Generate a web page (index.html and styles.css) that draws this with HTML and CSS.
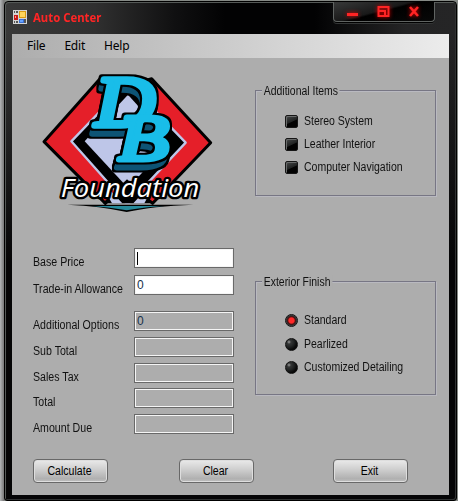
FILE: index.html
```html
<!DOCTYPE html>
<html lang="en">
<head>
<meta charset="utf-8">
<title>Auto Center</title>
<link rel="stylesheet" href="styles.css">
</head>
<body>
<div class="window">
  <header class="titlebar">
    <svg class="app-icon" width="14" height="14" viewBox="0 0 14 14">
      <rect width="14" height="14" fill="#d4d4d4"/>
      <path d="M1 1h1v2H1zM3 1h2v2H3zM1 11h1v2H1zM3 11h2v2H3zM11 9h2v4h-2z" fill="#555"/>
      <rect x="1" y="5" width="4" height="5" fill="#c81818"/><rect x="2" y="6" width="1" height="2" fill="#ff9a8a"/>
      <rect x="6" y="1" width="7" height="7" fill="#d99a10"/><rect x="7" y="2" width="5" height="5" fill="#ffd55a"/>
      <rect x="6" y="9" width="5" height="4" fill="#3970d8"/><rect x="7" y="10" width="3" height="2" fill="#68a4ff"/>
    </svg>
    <h1 class="title">Auto Center</h1>
    <div class="controls">
      <svg width="102" height="20" viewBox="0 0 102 20">
        <g fill="none" stroke="#ff2424" stroke-width="2">
          <path d="M14 12.500h11" stroke-width="3"/>
          <path d="M45.500 5h10v9h-10zM45 9h7v5"/>
          <path d="M77 5l8 9M85 5l-8 9" stroke-width="2.600"/>
        </g>
      </svg>
    </div>
  </header>
  <div class="client">
    <nav class="menu"><span>File</span><span>Edit</span><span>Help</span></nav>
    <main class="content">
      <section class="left">
        <svg class="logo" width="180" height="150" viewBox="0 0 540 450">
          <defs>
            <filter id="extrude" filterUnits="userSpaceOnUse" x="0" y="0" width="540" height="450" color-interpolation-filters="sRGB">
              <feOffset in="SourceAlpha" dx="-7" dy="24" result="low"/>
              <feOffset in="SourceAlpha" dx="-4" dy="13" result="mid"/>
              <feMerge result="depth"><feMergeNode in="low"/><feMergeNode in="mid"/></feMerge>
              <feMorphology in="depth" operator="dilate" radius="7" result="depthEdge"/>
              <feFlood flood-color="#0d5475"/><feComposite in2="depth" operator="in" result="side"/>
              <feMorphology in="SourceAlpha" operator="dilate" radius="7" result="faceEdge"/>
              <feFlood flood-color="#000"/><feComposite in2="depthEdge" operator="in" result="blackDepth"/>
              <feFlood flood-color="#000"/><feComposite in2="faceEdge" operator="in" result="blackFace"/>
              <feMerge>
                <feMergeNode in="blackDepth"/><feMergeNode in="side"/>
                <feMergeNode in="blackFace"/><feMergeNode in="SourceGraphic"/>
              </feMerge>
            </filter>
          </defs>
          <g stroke="#000" stroke-width="9" stroke-linejoin="round">
            <path d="M192 38L24 227L208 412L273 350L273 60Z" fill="#e51f29"/>
            <path d="M347 38L524 230L350 412L273 350L273 60Z" fill="#e51f29"/>
          </g>
          <path d="M275 50L106 226L270 410H280L449 230Z" fill="#000" stroke="#bec6e8" stroke-width="7" stroke-linejoin="round"/>
          <path d="M276 86L146 226L276 366L404 228Z" fill="#bec6e8"/>
          <path d="M200 412L273 340L353 412Z" fill="#000"/>
          <path d="M216 366L259 412H228L210 380ZM334 366L292 412H325L342 380Z" fill="#bec6e8"/>
          <path d="M94 416H472Q350 420 272 438Q194 420 94 416Z" fill="#000"/>
          <path d="M170 420H382Q320 424 272 433Q222 424 170 420Z" fill="#278a9b"/>
          <g class="monogram" filter="url(#extrude)">
            <text transform="translate(178 181) scale(1.240 1.080)">D</text>
            <text transform="translate(247 281) scale(1.240 .97)">B</text>
          </g>
          <text class="wordmark" x="74" y="394" textLength="416" lengthAdjust="spacingAndGlyphs">Foundation</text>
        </svg>
        <form class="fields">
          <label><span>Base Price</span><b class="box edit"><i class="caret"></i></b></label>
          <label><span>Trade-in Allowance</span><b class="box edit">0</b></label>
          <label><span>Additional Options</span><b class="box">0</b></label>
          <label><span>Sub Total</span><b class="box"></b></label>
          <label><span>Sales Tax</span><b class="box"></b></label>
          <label><span>Total</span><b class="box"></b></label>
          <label><span>Amount Due</span><b class="box"></b></label>
        </form>
      </section>
      <section class="right">
        <div class="group items">
          <h2>Additional Items</h2>
          <p><i class="check"></i><span>Stereo System</span></p>
          <p><i class="check"></i><span>Leather Interior</span></p>
          <p><i class="check"></i><span>Computer Navigation</span></p>
        </div>
        <div class="group finish">
          <h2>Exterior Finish</h2>
          <p><i class="radio on"></i><span>Standard</span></p>
          <p><i class="radio"></i><span>Pearlized</span></p>
          <p><i class="radio"></i><span>Customized Detailing</span></p>
        </div>
      </section>
    </main>
    <footer class="buttons">
      <button><span>Calculate</span></button>
      <button><span>Clear</span></button>
      <button><span>Exit</span></button>
    </footer>
  </div>
</div>
</body>
</html>
```
FILE: styles.css
```css
* { box-sizing: border-box; }
body {
  margin: 0; width: 458px; height: 501px; overflow: hidden;
  padding: 1px 0 0 4px;
  background: linear-gradient(90deg, #b4b6b8, #777 4px, #858985 5px);
  font: 12px/14px "Liberation Sans", Arial, sans-serif; color: #111;
}
.window {
  width: 453px; height: 500px; padding: 1px 7px 6px 7px;
  border: 1px solid #000; border-radius: 4px 4px 3px 3px;
  background: linear-gradient(180deg, transparent 0, transparent 30px, #050506 260px),
    linear-gradient(90deg, #393939 0, #303030 90px, #101011 170px, #020203 220px, #020203 310px, #242425 400px, #252526 100%);
  box-shadow: inset 1px 1px 0 #555957, inset -1px -1px 0 #303232;
}
.titlebar { display: flex; height: 31px; }
.app-icon { margin: 7px 0 0 1px; }
.title {
  margin: 6px 0 0 6px; font: bold 12px/18px "Noto Sans", sans-serif;
  color: #ff2525; width: 68px; white-space: nowrap; transform: scaleX(.945); transform-origin: 0 0;
}
.controls {
  margin-left: auto; margin-right: 14px; width: 102px; height: 20px; margin-top: -1px;
  border: 1px solid #606462; border-top: 0; border-radius: 0 0 4px 4px;
  background: linear-gradient(165deg, #383939, #191919 45%, #000 50%, #080808);
  box-shadow: 0 1px 0 #000, 0 2px 0 #343636;
}
.controls svg { display: block; margin-left: -1px; filter: drop-shadow(0 0 2px #e00); }
.client { width: 437px; height: 461px; background: #adadad; }
.menu {
  display: flex; gap: 19px; height: 24px; padding: 3px 0 0 15px;
  background: linear-gradient(90deg, #adadad, #ececec);
  font: 12px/17px "Noto Sans", sans-serif; letter-spacing: -.2px; color: #000;
}
.content { display: flex; height: 401px; }
.left { width: 243px; padding-top: 8px; }
.logo { display: block; margin-left: 24px; }
.monogram text {
  font: italic 200px "Liberation Serif", serif;
  fill: #19bde9; stroke: #19bde9; stroke-width: 15px; stroke-linejoin: round;
}
.wordmark {
  font: italic 500 76px "Open Sans", sans-serif; fill: #fff;
  stroke: #000; stroke-width: 14px; stroke-linejoin: round; paint-order: stroke;
}
.fields { margin: 32px 0 0 21px; }
.fields label { display: flex; height: 20px; margin-bottom: 6px; }
.fields label:nth-child(1) { margin-bottom: 7px; }
.fields label:nth-child(2) { margin-bottom: 16px; }
.fields label:nth-child(5) { margin-bottom: 5px; }
.fields span { width: 101px; padding-top: 7px; white-space: nowrap; transform: scaleX(.885); transform-origin: 0 0; }
.box {
  width: 100px; height: 20px; border: 1px solid #696969; box-shadow: inset 0 0 0 1px #f5f5f5;
  padding: 2px; font-weight: normal; color: #17324a;
}
.edit { background: #fff; }
.caret { display: block; width: 1px; height: 13px; margin-top: 1px; background: #000; }
.right { width: 181px; padding-top: 32px; }
.group {
  position: relative; width: 181px; border: 1px solid #777684;
  box-shadow: 1px 1px 0 #b9b9c0, inset 1px 1px 0 #b9b9c0;
}
.items { height: 106px; padding-top: 23px; }
.finish { height: 114px; margin-top: 85px; padding-top: 31px; }
.group h2 {
  position: absolute; left: 6px; top: -7px; margin: 0; padding: 0 2px;
  font: inherit; background: #adadad; white-space: nowrap; transform: scaleX(.87); transform-origin: 0 0;
}
.group p { display: flex; align-items: center; margin: 0 0 9px 29px; height: 14px; }
.group p span { margin-left: 6px; white-space: nowrap; transform: scaleX(.875); transform-origin: 0 50%; }
.finish p:nth-of-type(1) { margin-bottom: 10px; }
.check {
  width: 13px; height: 13px; border: 1px solid #161616; border-radius: 2px;
  background: linear-gradient(155deg, #484a4a, #202222 50%, #020202 56%);
  box-shadow: inset 1px 1px 0 #686a6a;
}
.radio {
  width: 13px; height: 13px; border-radius: 50%; border: 1px solid #111;
  background: radial-gradient(circle at 3px 3px, #999 0, #343636 2px, #202222 5px, #080808 8px);
}
.radio.on { background: radial-gradient(circle, #ff2929 0, #ff2929 2.600px, #4a1010 3.800px, #333 5px, #777 6px); }
.buttons { display: flex; padding-left: 21px; }
button {
  width: 75px; height: 24px; margin: 0 71px 0 0; padding: 0; border: 1px solid #686868;
  border-radius: 4px; background: linear-gradient(#eaeaea, #cdcdcd 45%, #b0b0b0 85%, #c0c0c0);
  box-shadow: inset 0 0 0 1px #dedede; font: inherit; color: #000;
}
button:nth-child(2) { margin-right: 79px; }
button:last-child { margin-right: 0; }
button span { display: block; transform: translateX(-1px) scaleX(.88); }
```
